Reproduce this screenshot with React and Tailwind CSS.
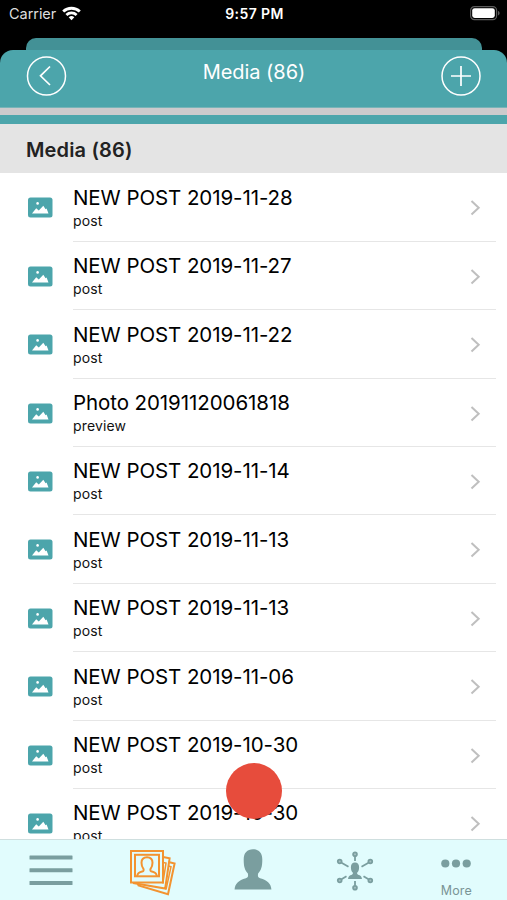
import { useState } from 'react';

const media = [
  { id: 1, title: 'NEW POST 2019-11-28', type: 'post' },
  { id: 2, title: 'NEW POST 2019-11-27', type: 'post' },
  { id: 3, title: 'NEW POST 2019-11-22', type: 'post' },
  { id: 4, title: 'Photo 20191120061818', type: 'preview' },
  { id: 5, title: 'NEW POST 2019-11-14', type: 'post' },
  { id: 6, title: 'NEW POST 2019-11-13', type: 'post' },
  { id: 7, title: 'NEW POST 2019-11-13', type: 'post' },
  { id: 8, title: 'NEW POST 2019-11-06', type: 'post' },
  { id: 9, title: 'NEW POST 2019-10-30', type: 'post' },
  { id: 10, title: 'NEW POST 2019-10-30', type: 'post' },
];

function StatusBar() {
  return (
    <div className="h-[38px] shrink-0 grid grid-cols-3 items-start pt-[4px] pl-[9px] pr-[7px] text-white">
      <div className="flex items-center h-5 gap-[6px]">
        <span className="text-[14.5px] leading-5 tracking-[-0.05px] text-[#dedede]">Carrier</span>
        <svg width="19" height="15" viewBox="0 0 19 15" fill="none" stroke="white" strokeWidth="2.8" className="-mt-[2px]">
          <path d="M1.2 5.6a12 12 0 0 1 16.600 0" />
          <path d="M4.400 9a7.400 7.400 0 0 1 10.200 0" />
          <path d="M9.500 14.200 6.700 11.300a4 4 0 0 1 5.600 0Z" fill="white" stroke="none" />
        </svg>
      </div>
      <span className="text-center text-[14px] leading-5 font-semibold tracking-[0.4px]">9:57 PM</span>
      <svg width="30" height="15" viewBox="0 0 30 15" className="justify-self-end mt-[2px]">
        <rect x="0.6" y="0.6" width="26" height="13" rx="3.8" fill="none" stroke="#5c5c5c" strokeWidth="1.2" />
        <rect x="2.2" y="2.2" width="22.6" height="9.8" rx="2.4" fill="white" />
        <path d="M28 5v4.400c1-.4 1.600-1.200 1.600-2.200S29 5.400 28 5Z" fill="#5c5c5c" />
      </svg>
    </div>
  );
}

function Header({ title }) {
  return (
    <>
      <div className="h-3 shrink-0 ml-[26px] mr-[25px] rounded-t-[10px] bg-[#439196]" />
      <div className="h-[57px] shrink-0 rounded-t-[13px] bg-[#4ca5ab] flex justify-between pl-[26px] pr-[25px] pt-[5px] text-white">
        <button aria-label="Back" className="size-[41px]">
          <svg width="41" height="41" viewBox="0 0 41 41" fill="none" stroke="white">
            <circle cx="20.5" cy="21" r="19" strokeWidth="1.5" />
            <path d="M24 11.500 14.500 20.800 24 30" strokeWidth="1.7" />
          </svg>
        </button>
        <h1 className="text-[20px] leading-8 tracking-[-0.05px] pt-px">{title}</h1>
        <button aria-label="Add" className="size-[41px]">
          <svg width="41" height="41" viewBox="0 0 41 41" fill="none" stroke="white">
            <circle cx="20" cy="21" r="19" strokeWidth="1.5" />
            <path d="M20 11v20M10 21h20" strokeWidth="1.7" />
          </svg>
        </button>
      </div>
      <div className="h-2 shrink-0 bg-[#cccacc] border-t border-[#78b4b8]" />
      <div className="h-[9px] shrink-0 bg-[#4ca5ab]" />
    </>
  );
}

function MediaRow({ item }) {
  return (
    <li className="h-[68.4px] shrink-0 flex pl-7 pr-[11px]">
      <svg width="25" height="21" viewBox="0 0 25 21" className="mt-[24px] shrink-0">
        <rect x="0" y="0.500" width="24.5" height="20" rx="2.5" fill="#4ca5ab" />
        <circle cx="9.600" cy="6.400" r="1.300" fill="white" />
        <path d="M4 16.500 8.200 11.200l2.600 2.400L15.300 8.800l2.300 3.400 1-.6 1.900 4.900Z" fill="white" />
      </svg>
      <div className="flex-1 flex ml-5 pr-[15px] border-b border-[#e6e6e6]">
        <div className="flex-1 pt-[10.5px]">
          <p className="text-[20.5px] leading-7 tracking-[-0.08px] text-black whitespace-nowrap">{item.title}</p>
          <p className="text-[14px] leading-[18px] tracking-[0.15px] text-[#111]">{item.type}</p>
        </div>
        <svg width="11" height="16" viewBox="0 0 11 16" fill="none" stroke="#bfbfbf" strokeWidth="2" className="mt-[27px]">
          <path d="M1.500 1 8.700 7.800 1.500 14.600" />
        </svg>
      </div>
    </li>
  );
}

function MenuIcon() {
  return (
    <svg width="44" height="32" viewBox="0 0 44 32" fill="#7a9e9f">
      <rect x="0.500" y="0.500" width="43" height="4" rx="0.5" />
      <rect x="0.500" y="13.200" width="43" height="4" rx="0.5" />
      <rect x="0.500" y="25.900" width="43" height="4" rx="0.5" />
    </svg>
  );
}

function PhotosIcon() {
  return (
    <svg width="46" height="46" viewBox="0 0 46 46" fill="none" stroke="#f39330" strokeWidth="2">
      <path d="M38.500 12 44.600 13.500 38 44.200 8.500 35.500 7.500 33" />
      <path d="M33 7 39.600 8.300 35.200 38.500 3 33" />
      <path d="M38.500 16 41 16.800 36 39.700M33 12.500 36 13 32.800 33.500" strokeWidth="1.500" />
      <rect x="1" y="1" width="32" height="31.500" fill="#e1fcfd" />
      <rect x="5" y="4.800" width="24" height="21.500" />
      <path d="M7.200 26c.3-2.800 1.700-3.600 5.700-4.800.8-.3.900-1.700.5-2.400-1.500-1.800-1.900-3.400-1.900-6 0-3.500 2-5.600 5.500-5.600s5.500 2.100 5.500 5.600c0 2.600-.4 4.200-1.900 6-.4.700-.3 2.100.5 2.400 4 1.200 5.400 2 5.700 4.800" />
    </svg>
  );
}

function PersonIcon() {
  return (
    <svg width="38" height="41" viewBox="0 0 38 41" fill="#7a9e9f">
      <path d="M19 0.300C13.200 0.300 9.700 4 9.700 10.500c0 7.500 1.300 10.800 4.200 14 .6 3-.2 4.200-2 4.700C4.500 31.200 1 34.500.600 40.600h36.800C37 34.500 33.500 31.200 26.100 29.200c-1.800-.5-2.600-1.700-2-4.700 2.900-3.200 4.200-6.500 4.200-14C28.300 4 24.800.300 19 .300Z" />
    </svg>
  );
}

function NetworkIcon() {
  return (
    <svg width="38" height="40" viewBox="0 0 38 40" fill="none" stroke="#7a9e9f" strokeWidth="1.800">
      <circle cx="19" cy="3.200" r="1.900" fill="#a5c1c2" />
      <circle cx="19" cy="36.800" r="1.900" fill="#a5c1c2" />
      <circle cx="3.700" cy="10.500" r="1.900" fill="#a5c1c2" />
      <circle cx="34.300" cy="10.500" r="1.900" fill="#a5c1c2" />
      <circle cx="3.700" cy="29.500" r="1.900" fill="#a5c1c2" />
      <circle cx="34.300" cy="29.500" r="1.900" fill="#a5c1c2" />
      <path d="M19 5.200V10M19 30v4.800M5.500 11.800l7 4M32.500 11.800l-7 4M5.500 28.200l5-3M32.500 28.200l-5-3" />
      <path
        d="M19 11.500c-2.700 0-4.100 1.800-4.100 4.700 0 2.600.6 4.200 2 5.600 0 1-.2 1.600-1 1.900-2.300.6-3.500 1.600-3.900 4.300h14c-.4-2.700-1.600-3.700-3.900-4.300-.8-.3-1-.9-1-1.900 1.400-1.400 2-3 2-5.600 0-2.900-1.400-4.700-4.100-4.700Z"
        fill="#7a9e9f"
        stroke="none"
      />
    </svg>
  );
}

function MoreIcon() {
  return (
    <svg width="30" height="9" viewBox="0 0 30 9" fill="#7a9e9f">
      <circle cx="4.300" cy="4.500" r="4.100" />
      <circle cx="15" cy="4.500" r="4.100" />
      <circle cx="25.700" cy="4.500" r="4.100" />
    </svg>
  );
}

function TabBar({ active, onSelect }) {
  return (
    <nav className="h-[61px] shrink-0 grid grid-cols-5 bg-[#e1fcfd] border-t border-[#cfdfdf]">
      <button aria-label="Menu" onClick={() => onSelect('menu')} className="flex justify-center items-start pt-[15px]">
        <MenuIcon />
      </button>
      <button
        aria-label="Media"
        aria-current={active === 'media'}
        onClick={() => onSelect('media')}
        className="flex justify-center items-start pt-[10px] pl-px"
      >
        <PhotosIcon />
      </button>
      <button aria-label="Profile" onClick={() => onSelect('profile')} className="flex justify-center items-start pt-[9px]">
        <PersonIcon />
      </button>
      <button aria-label="Network" onClick={() => onSelect('network')} className="flex justify-center items-start pt-[11px]">
        <NetworkIcon />
      </button>
      <button onClick={() => onSelect('more')} className="flex flex-col items-center pt-[19px] gap-[15px]">
        <MoreIcon />
        <span className="text-[12.5px] leading-4 tracking-[0.1px] text-[#7a9496]">More</span>
      </button>
    </nav>
  );
}

export default function App() {
  const [tab, setTab] = useState('media');
  const title = 'Media (86)';

  return (
    <div className="relative w-full h-screen flex flex-col overflow-hidden bg-black font-['Inter','Liberation_Sans',sans-serif]">
      <StatusBar />
      <Header title={title} />
      <main className="flex-1 min-h-0 flex flex-col overflow-hidden bg-white">
        <h2 className="h-[49px] shrink-0 pl-[26px] pt-[2px] flex items-center bg-[#e4e4e4] text-[20px] tracking-[0.15px] font-semibold text-[#222]">
          {title}
        </h2>
        <ul className="flex flex-col pt-[0.4px]">
          {media.map((item) => (
            <MediaRow key={item.id} item={item} />
          ))}
        </ul>
      </main>
      <TabBar active={tab} onSelect={setTab} />
      <div className="absolute left-[226px] top-[763px] size-[56px] rounded-full bg-[#e74c3c]" />
    </div>
  );
}
